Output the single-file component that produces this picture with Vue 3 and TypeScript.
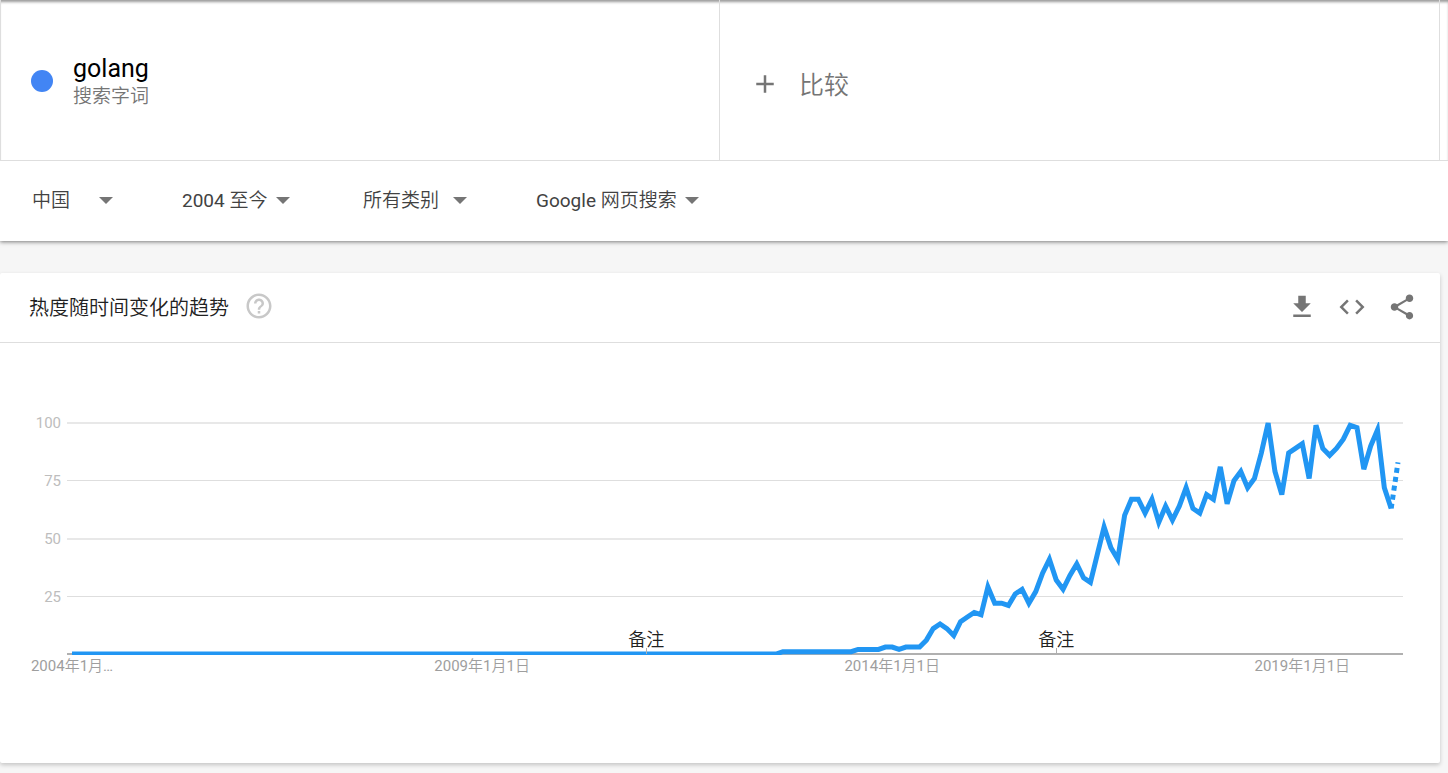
<script setup lang="ts">
import { computed, onBeforeUnmount, onMounted, ref } from 'vue'

interface Filter {
  id: string
  label: string
  value: string
}

const filters: Filter[] = [
  { id: 'region', label: '地区', value: '中国' },
  { id: 'period', label: '时间范围', value: '2004 至今' },
  { id: 'category', label: '类别', value: '所有类别' },
  { id: 'source', label: '搜索类型', value: 'Google 网页搜索' },
]

// Monthly interest, January 2004 onwards; the last month is incomplete.
const interest: number[] = [
  ...Array<number>(104).fill(0),
  ...Array<number>(11).fill(1),
  2, 2, 2, 2, 3,
  3, 2, 3, 3, 3, 6, 11, 13, 11, 8, 14, 16,
  18, 17, 29, 22, 22, 21, 26, 28, 22, 27, 35, 41,
  32, 28, 34, 39, 33, 31, 43, 55, 46, 41, 60, 67,
  67, 61, 67, 57, 64, 58, 64, 72, 63, 61, 69, 67,
  81, 65, 75, 79, 72, 76, 87, 100, 79, 69, 87, 89,
  91, 76, 99, 89, 86, 89, 93, 99, 98, 80, 90, 97,
  72, 63, 83,
]

const plotLeft = 67
const plotTop = 80
const plotHeight = 231

const host = ref<HTMLElement | null>(null)
const width = ref(1440)
let observer: ResizeObserver | undefined

onMounted(() => {
  if (!host.value) return
  width.value = host.value.clientWidth
  observer = new ResizeObserver(() => {
    if (host.value) width.value = host.value.clientWidth
  })
  observer.observe(host.value)
})
onBeforeUnmount(() => observer?.disconnect())

const plotRight = computed(() => width.value - 37)
const step = computed(() => (plotRight.value - plotLeft - 10) / (interest.length - 1))
const x = (month: number) => plotLeft + 5 + month * step.value
const y = (value: number) => plotTop + plotHeight * (1 - value / 100)

const toPoints = (from: number, to: number) =>
  interest
    .slice(from, to)
    .map((value, i) => `${x(from + i).toFixed(2)},${y(value).toFixed(2)}`)
    .join(' ')

const solid = computed(() => toPoints(0, interest.length - 1))
const partial = computed(() => toPoints(interest.length - 2, interest.length))

// Major levels are drawn as wider, paler lines than the ones between them.
const levels = [100, 75, 50, 25].map((value) => {
  const major = value % 50 === 0
  return { value, major, base: Math.ceil(y(value)), height: major ? 2 : 1 }
})
const dates = [
  { month: 0, text: '2004年1月…' },
  { month: 60, text: '2009年1月1日' },
  { month: 120, text: '2014年1月1日' },
  { month: 180, text: '2019年1月1日' },
]
const notes = [84, 144]
</script>

<template>
  <div class="page">
    <header class="explore">
      <div class="terms-row">
        <div class="terms">
          <div class="term">
            <span class="dot"></span>
            <div class="term-text">
              <div class="term-name">golang</div>
              <div class="term-kind">搜索字词</div>
            </div>
          </div>
          <button type="button" class="compare">
            <svg class="icon" viewBox="0 0 24 24" aria-hidden="true">
              <path d="M19 13h-6v6h-2v-6H5v-2h6V5h2v6h6v2z" />
            </svg>
            <span>比较</span>
          </button>
        </div>
      </div>
      <div class="filters">
        <div v-for="filter in filters" :key="filter.id" class="filter" :class="filter.id">
          <select :id="filter.id" :aria-label="filter.label">
            <option>{{ filter.value }}</option>
          </select>
          <svg class="arrow" viewBox="0 0 14 7" aria-hidden="true"><path d="M0 0h14L7 7z" /></svg>
        </div>
      </div>
    </header>

    <section class="card">
      <div class="card-head">
        <h2>热度随时间变化的趋势</h2>
        <button type="button" class="help" aria-label="帮助">
          <svg class="icon" viewBox="0 0 24 24">
            <path d="M11 18h2v-2h-2v2zm1-16C6.48 2 2 6.48 2 12s4.48 10 10 10 10-4.48 10-10S17.52 2 12 2zm0 18c-4.41 0-8-3.59-8-8s3.59-8 8-8 8 3.59 8 8-3.59 8-8 8zm0-14c-2.21 0-4 1.79-4 4h2c0-1.1.9-2 2-2s2 .9 2 2c0 2-3 1.75-3 5h2c0-2.25 3-2.5 3-5 0-2.21-1.79-4-4-4z" />
          </svg>
        </button>
        <div class="actions">
          <button type="button" aria-label="下载">
            <svg class="icon" viewBox="0 0 24 24"><path d="M19 9h-4V3H9v6H5l7 7 7-7zM5 18v2h14v-2H5z" /></svg>
          </button>
          <button type="button" aria-label="嵌入">
            <svg class="icon" viewBox="0 0 24 24">
              <path d="M9.4 16.6L4.8 12l4.6-4.6L8 6l-6 6 6 6 1.4-1.4zm5.2 0l4.6-4.6-4.6-4.6L16 6l6 6-6 6-1.4-1.4z" />
            </svg>
          </button>
          <button type="button" aria-label="分享">
            <svg class="icon" viewBox="0 0 24 24">
              <path d="M18 16.08c-.76 0-1.44.3-1.96.77L8.91 12.7c.05-.23.09-.46.09-.7s-.04-.47-.09-.7l7.05-4.11c.54.5 1.25.81 2.04.81 1.66 0 3-1.34 3-3s-1.34-3-3-3-3 1.34-3 3c0 .24.04.47.09.7L8.04 9.81C7.5 9.31 6.79 9 6 9c-1.66 0-3 1.34-3 3s1.34 3 3 3c.79 0 1.5-.31 2.04-.81l7.12 4.16c-.05.21-.08.43-.08.65 0 1.61 1.31 2.92 2.92 2.92s2.92-1.31 2.92-2.92-1.31-2.92-2.92-2.92z" />
            </svg>
          </button>
        </div>
      </div>

      <div ref="host" class="chart">
        <svg :width="width" height="420" role="img" aria-label="热度随时间变化的趋势">
          <defs>
            <clipPath id="plot-area">
              <rect :x="plotLeft" :y="plotTop - 1" :width="plotRight - plotLeft" :height="plotHeight + 2" />
            </clipPath>
          </defs>
          <g v-for="level in levels" :key="level.value">
            <rect
              class="grid"
              :class="{ major: level.major }"
              :x="plotLeft"
              :y="level.base - 1"
              :width="plotRight - plotLeft"
              :height="level.height"
            />
            <text class="level" :x="plotLeft - 6" :y="level.base + 5">{{ level.value }}</text>
          </g>
          <rect class="axis" :x="plotLeft" :y="y(0) - 1" :width="plotRight - plotLeft" height="2" />
          <g clip-path="url(#plot-area)">
            <polyline class="line" :points="solid" />
            <polyline class="line partial" :points="partial" />
          </g>
          <g v-for="month in notes" :key="month">
            <rect class="axis" :x="Math.round(x(month))" :y="y(0) - 6" width="1" height="6" />
            <text class="note" :x="x(month)" :y="y(0) - 8">备注</text>
          </g>
          <text v-for="date in dates" :key="date.month" class="date" :x="x(date.month)" :y="y(0) + 17">{{ date.text }}</text>
        </svg>
      </div>
    </section>
  </div>
</template>

<style>
body {
  margin: 0;
  background: #f6f6f6;
}
</style>

<style scoped>
.page {
  box-sizing: border-box;
  min-height: 100vh;
  padding-bottom: 10px;
  background: #f6f6f6;
  color: #212121;
  font-family: Roboto, "Noto Sans CJK SC DemiLight", "Noto Sans CJK SC", sans-serif;
}
button,
select {
  margin: 0;
  padding: 0;
  border: 0;
  background: none;
  font: inherit;
  cursor: pointer;
}
.icon {
  display: block;
  width: 30px;
  height: 30px;
  fill: #757575;
}
.explore {
  background: #fff;
  box-shadow: 0 1px 4px rgba(0, 0, 0, 0.5);
}
.terms-row {
  border-bottom: 1px solid #dedede;
  box-shadow: inset 0 3px 3px -1px rgba(0, 0, 0, 0.4);
}
.terms {
  display: grid;
  grid-template-columns: 1fr 1fr;
  height: 160px;
  margin-right: 8px;
}
.term,
.compare {
  display: flex;
  align-items: center;
  border-right: 1px solid #dedede;
}
.term {
  gap: 20px;
  padding: 2px 0 0 30px;
  border-left: 1px solid #dedede;
}
.term-text {
  padding-top: 3px;
}
.dot {
  width: 22px;
  height: 22px;
  border-radius: 50%;
  background: #4285f4;
}
.term-name {
  color: #000;
  font-size: 25px;
  line-height: 28px;
}
.term-kind {
  color: #757575;
  font-size: 19px;
  font-weight: 300;
  line-height: 27px;
}
.compare {
  gap: 19px;
  padding: 8px 0 0 30px;
  color: #757575;
  font-size: 25px;
  font-weight: 350;
  line-height: 34px;
}
.compare span {
  padding-top: 4px;
}
.filters {
  display: grid;
  grid-template-columns: 150px 181px 173px auto;
  align-items: center;
  height: 80px;
  padding-left: 32px;
}
.filter {
  display: grid;
  align-items: center;
}
.filter > * {
  grid-area: 1 / 1;
}
.region { width: 81px; }
.period { width: 108px; }
.category { width: 104px; }
.source { width: 163px; }
.filter select {
  appearance: none;
  width: 100%;
  color: #424242;
  font-size: 19px;
  line-height: 28px;
}
.arrow {
  justify-self: end;
  width: 14px;
  height: 7px;
  margin-bottom: 2px;
  fill: #757575;
  pointer-events: none;
}
.card {
  margin: 32px 8px 0 0;
  border-radius: 2px;
  background: #fff;
  box-shadow: 0 2px 4px rgba(0, 0, 0, 0.2);
}
.card-head {
  display: flex;
  align-items: center;
  height: 69px;
  padding: 0 23px 0 29px;
  border-bottom: 1px solid #dedede;
}
h2 {
  margin: 0;
  font-size: 20px;
  font-weight: 350;
  line-height: 30px;
}
.help {
  margin-left: 15px;
  padding-bottom: 3px;
}
.help .icon {
  fill: #c8c8c8;
}
.actions {
  display: flex;
  gap: 20px;
  margin-left: auto;
  padding-bottom: 1px;
}
.chart {
  overflow: hidden;
}
.chart svg {
  display: block;
}
.grid {
  fill: #dedede;
}
.grid.major {
  fill: #e8e8e8;
}
.axis {
  fill: #b0b0b0;
}
.line {
  fill: none;
  stroke: #2196f3;
  stroke-width: 5;
}
.partial {
  stroke-dasharray: 5 4;
}
.level {
  fill: #bdbdbd;
  font-size: 15px;
  text-anchor: end;
}
.date {
  fill: #9e9e9e;
  font-size: 15px;
  text-anchor: middle;
}
.note {
  fill: #212121;
  font-size: 18px;
  font-weight: 350;
  text-anchor: middle;
}
</style>
